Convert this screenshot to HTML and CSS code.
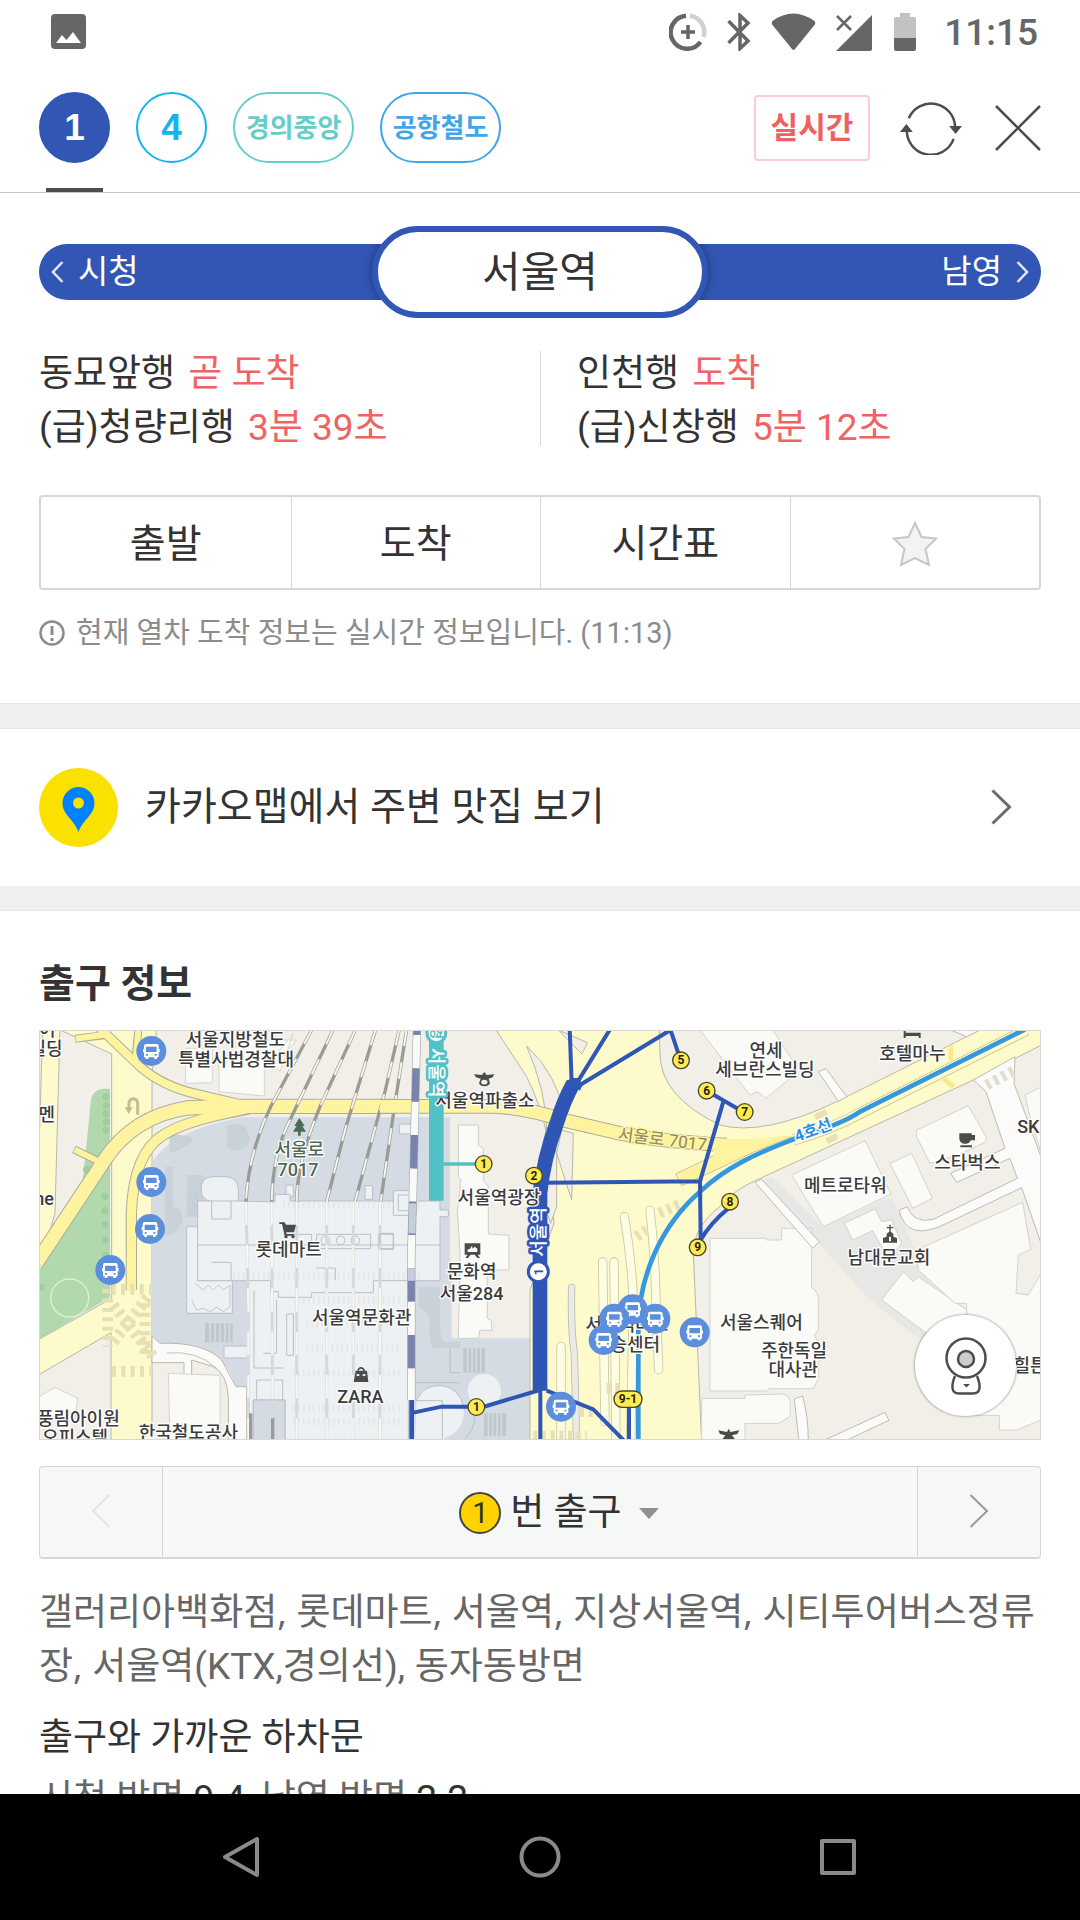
FILE: index.html
```html
<!DOCTYPE html>
<html lang="ko">
<head>
<meta charset="utf-8">
<meta name="viewport" content="width=device-width, initial-scale=1">
<title>서울역</title>
<link rel="stylesheet" href="styles.css">
</head>
<body>
<div class="app">
  <div class="status">
    <svg class="status-photo" width="35" height="35" viewBox="0 0 35 35"><path fill="#666" fill-rule="evenodd" d="M4 0H31Q35 0 35 4V31Q35 35 31 35H4Q0 35 0 31V4Q0 0 4 0ZM5 29H30L22 18L15.500 26L11 21Z"/></svg>
    <div class="status-icons">
      <svg width="38" height="38" viewBox="0 0 38 38" fill="none" stroke="#666" stroke-width="4.500"><path d="M17 2.800A16.500 16.500 0 1 0 31.500 29"/><path stroke="#d0d0d0" d="M21 2.800A16.500 16.500 0 0 1 34.500 24"/><path stroke-width="3.500" d="M19 12V26M12 19H26"/></svg>
      <svg width="24" height="38" viewBox="0 0 24 38" fill="none" stroke="#666" stroke-width="3.500"><path d="M1.500 8L21 28L13 35.500V2.500L21 10L1.500 30"/></svg>
      <svg width="45" height="38" viewBox="0 0 45 38"><path fill="#666" d="M1.500 8Q22 -7 43.500 8Q45 10 43.500 12L24 36Q22.500 38 21 36L1.500 12Q0 10 1.500 8Z"/></svg>
      <svg width="36" height="38" viewBox="0 0 36 38"><path fill="#666" d="M36 2V36Q36 38 34 38H0Z"/><path stroke="#fff" stroke-width="6" d="M1 3L15 17M15 3L1 17"/><path stroke="#666" stroke-width="2.500" d="M1 3L15 17M15 3L1 17"/></svg>
      <svg width="26" height="38" viewBox="0 0 26 38"><path fill="#c2c2c2" d="M8 0H18V4H22Q24 4 24 6V25H2V6Q2 4 4 4H8Z"/><path fill="#666" d="M2 25H24V36Q24 38 22 38H4Q2 38 2 36Z"/></svg>
    </div>
    <time class="clock">11:15</time>
  </div>

  <header class="topbar">
    <nav class="lines" aria-label="노선">
      <a class="line line-1" href="#" aria-current="page"><span class="badge">1</span></a>
      <a class="line line-4" href="#"><span class="badge">4</span></a>
      <a class="line line-gj" href="#"><span class="badge badge-wide">경의중앙</span></a>
      <a class="line line-ar" href="#"><span class="badge badge-wide">공항철도</span></a>
    </nav>
    <button class="live" type="button">실시간</button>
    <button class="icon-button" type="button" aria-label="새로고침">
      <svg width="62" height="54" viewBox="0 0 63 54" fill="none" stroke="#4d4d4d" stroke-width="2.500"><path d="M9 17A24.500 24.500 0 0 1 56 26M54.500 38A24.500 24.500 0 0 1 7 28"/><path fill="#4d4d4d" stroke="none" d="M50 25H63L56.500 33ZM0 31H13L6.500 23Z"/></svg>
    </button>
    <button class="icon-button close" type="button" aria-label="닫기">
      <svg width="46" height="46" viewBox="0 0 46 46" stroke="#4d4d4d" stroke-width="2.500"><path d="M1 1L45 45M45 1L1 45"/></svg>
    </button>
  </header>

  <main class="content">
    <section class="station">
      <div class="station-bar">
        <a class="side side-prev" href="#"><svg width="13" height="22" viewBox="0 0 13 22" fill="none" stroke="#e4e9f5" stroke-width="2.500"><path d="M11.500 1L2 11L11.500 21"/></svg>시청</a>
        <h1 class="station-name">서울역</h1>
        <a class="side side-next" href="#">남영<svg width="13" height="22" viewBox="0 0 13 22" fill="none" stroke="#e4e9f5" stroke-width="2.500"><path d="M1.500 1L11 11L1.500 21"/></svg></a>
      </div>
      <div class="arrivals">
        <ul class="arrival-list">
          <li>동묘앞행 <em>곧 도착</em></li>
          <li>(급)청량리행 <em>3분 39초</em></li>
        </ul>
        <ul class="arrival-list">
          <li>인천행 <em>도착</em></li>
          <li>(급)신창행 <em>5분 12초</em></li>
        </ul>
      </div>
      <div class="actions">
        <button type="button">출발</button>
        <button type="button">도착</button>
        <button type="button">시간표</button>
        <button type="button" aria-label="즐겨찾기"><svg width="46" height="46" viewBox="0 0 46 46"><path fill="#f3f3f3" stroke="#c6c6c6" stroke-width="2" d="M23 2L29.500 16L44 17.500L33.500 28L37 44L23 37L9 44L12.500 28L2 17.500L16.500 16Z"/></svg></button>
      </div>
      <p class="notice"><svg width="26" height="26" viewBox="0 0 26 26"><circle cx="13" cy="13" r="11.500" fill="none" stroke="#8c8c8c" stroke-width="2.500"/><path stroke="#8c8c8c" stroke-width="3" d="M13 6V15M13 18V21"/></svg>현재 열차 도착 정보는 실시간 정보입니다. (11:13)</p>
    </section>

    <a class="kakao" href="#">
      <svg width="79" height="79" viewBox="0 0 79 79"><circle cx="39.500" cy="39.500" r="39.500" fill="#fae100"/><path fill="#0082ff" fill-rule="evenodd" d="M39.500 19C48 19 55.500 26 55.500 35C55.500 47 44 51 39.500 64C35 51 23.500 47 23.500 35C23.500 26 31 19 39.500 19ZM39.500 29.500A5.500 5.500 0 1 0 39.500 40.500A5.500 5.500 0 1 0 39.500 29.500Z"/></svg>
      <span class="kakao-text">카카오맵에서 주변 맛집 보기</span>
      <svg width="21" height="36" viewBox="0 0 21 36" fill="none" stroke="#6b6b6b" stroke-width="3"><path d="M1.500 1.500L18.500 18L1.500 34.500"/></svg>
    </a>

    <section class="exits">
      <h2>출구 정보</h2>
      <div class="map">
        <svg class="map-canvas" viewBox="0 0 3006 1230" preserveAspectRatio="xMidYMid slice" role="img" aria-label="서울역 주변 지도">
          <defs>
            <g id="bus"><circle r="45" fill="#5b8fdd"/><path fill="#fff" fill-rule="evenodd" d="M-16 -21H16Q22 -21 22 -14V-6H25V4H22V19H17V24H9V19H-9V24H-17V19H-22V4H-25V-6H-22V-14Q-22 -21 -16 -21ZM-16 -13V3H16V-13ZM-16 9V14H-10V9ZM10 9V14H16V9Z"/></g>
            <g id="exit"><circle r="25" fill="#ffea50" stroke="#48442c" stroke-width="4"/></g>
          </defs>
          <rect width="3006" height="1230" fill="#f2efe9"/>

          <!-- west: park and roads -->
          <g transform="translate(-27 -30)">
            <g stroke="#b9b7ab" stroke-width="3">
              <path fill="#fdfacb" d="M38 20H90L75 580L55 650L20 700V390H27Z"/>
              <path fill="#b2d9ae" stroke="none" d="M183 240Q190 200 240 207V832L27 958V750L150 560Z"/>
              <path fill="#fdfacb" d="M80 25L245 102V835L20 962V1068L243 938V1265H366V165L380 25Z"/>
              <path fill="#d4dbe2" stroke="none" d="M366 430Q420 330 640 292H1260V1265H650V1100H618Q580 985 470 972L390 968L366 945Z"/>
              <path fill="#fafaf8" d="M366 948L390 970Q520 965 575 1020L618 1100H650V1265H595V1130Q590 1060 550 1040L485 1020V1070L462 1074V1028H366Z"/>
              <path fill="none" stroke="#c4c4be" d="M410 999Q500 990 560 1045"/>
            </g>
            <path fill="#fafbf7" stroke="#d6d6d0" stroke-width="3" d="M467 85H547V188L467 190ZM567 130L640 60H800L740 130H703V228L567 215ZM415 1060L570 1066V1265H420ZM27 1130L75 1102L143 1135L135 1200H27ZM725 120L790 40L750 155Z"/>
            <g fill="#c9d1d9"><path d="M418 340L485 350Q500 370 420 400ZM590 320Q650 290 660 360Q640 410 590 380ZM405 440H430V560Q460 560 458 600Q440 650 405 645ZM470 465H520V590H470Z"/></g>
            <g fill="none" stroke="#aeaca0">
              <path stroke-width="46" d="M20 728L225 418Q310 290 470 264L590 259H1100"/>
              <path stroke-width="30" d="M205 20L330 140Q400 200 500 222L620 250"/>
              <path stroke-width="34" d="M304 810V580Q310 400 400 345Q450 312 570 284L660 266"/>
              <path stroke-width="24" d="M132 388L215 428M135 56L235 44M326 20L317 110"/>
            </g>
            <g fill="none" stroke="#fef39e">
              <path stroke-width="40" d="M20 728L225 418Q310 290 470 264L590 259H1100"/>
              <path stroke-width="24" d="M205 20L330 140Q400 200 500 222L640 255"/>
              <path stroke-width="28" d="M304 812V580Q310 400 400 345Q450 312 570 284L660 264"/>
              <path stroke-width="18" d="M134 389L218 430M137 56L240 42M326 20L317 118"/>
            </g>
            <path fill="none" stroke="#e8dfb4" stroke-width="32" stroke-dasharray="12 16" d="M233 808V980M246 1054H366M245 808H366M345 850V1010"/>
            <path fill="none" stroke="#e8dfb4" stroke-width="34" stroke-dasharray="12 14" d="M250 965L355 830M250 855L370 1010"/>
            <path fill="none" stroke="#c9bd8c" stroke-width="9" d="M323 284V250Q322 236 308 236Q294 238 297 266"/>
            <path fill="#c9bd8c" d="M284 262H308L296 282Z"/>
            <g fill="#a0cf9d"><circle cx="228" cy="230" r="11"/><circle cx="229" cy="256" r="11"/><circle cx="228" cy="281" r="11"/><circle cx="229" cy="306" r="11"/><circle cx="228" cy="331" r="11"/><circle cx="170" cy="448" r="11"/><circle cx="225" cy="529" r="11"/><circle cx="225" cy="572" r="11"/><circle cx="225" cy="613" r="11"/><circle cx="225" cy="660" r="11"/><circle cx="225" cy="706" r="11"/><circle cx="34" cy="802" r="11"/></g>
            <circle cx="119" cy="834" r="57" fill="none" stroke="#dcefd9" stroke-width="4"/>
            <!-- station building -->
            <g fill="#edf1f4" stroke="#b9bfc6" stroke-width="3">
              <path d="M625 545V505Q620 470 585 470H545Q513 472 513 510Q515 540 545 545Z"/>
              <path d="M470 620H503V782H607V880H470ZM582 978H660V1014H582ZM1005 497H1028V538H1005ZM768 495H790V530H768Z"/>
              <path d="M655 780H1135V1265H765V1140H670V1265H655Z"/>
              <path d="M503 543H625L735 546V523H780V543H1230V570H1255V590H1230V782H1030V818H845V832H745V815H722V782H503Z"/>
              <path fill="none" d="M503 675H1230M545 543V597H603V543M545 727H603V780M860 643H1022V686H860ZM1045 643H1090V686H1045ZM800 643H845V686H800ZM858 744H916V780M680 1140V1080H758V1140M740 840V1000H700M770 882H790V1006H770ZM672 812V1044H760"/>
              <g fill="none"><circle cx="886" cy="661" r="13"/><circle cx="932" cy="661" r="13"/><circle cx="976" cy="661" r="13"/></g>
              <path fill="#d4dbe2" d="M670 1140H765V1265H670Z"/>
            </g>
            <path fill="#bfc7cf" d="M525 910H608V967H525Z"/>
            <path stroke="#d4dbe2" stroke-width="5" d="M540 910V967M555 910V967M570 910V967M585 910V967M598 910V967"/>
            <path fill="none" stroke="#c3c8cd" stroke-width="3" d="M475 520L488 515L500 530L485 545L500 560L485 575L475 560M495 790L520 810L535 795L550 810L565 795L580 810L600 795V860L580 875L560 862L540 875L520 865L500 870L485 840"/>
            <g fill="none" stroke="#dde2e5" stroke-width="22" stroke-dasharray="3 12"><path d="M760 555H1180M610 770H1180M820 840H1110M830 910H1110M830 985H1110M790 1060H1110M790 1165H1110M790 1205H1110"/></g>
            <path fill="none" stroke="#d8d8d8" stroke-width="9" d="M648 545L655 860V1265M725 545L728 1265M800 545V1265M890 545V1265M970 545V1265M1050 545V1265"/>
            <path fill="none" stroke="#f8f8f3" stroke-width="6" stroke-dasharray="70 60" d="M648 545L655 860V1265M725 545L728 1265M800 545V1265M890 545V1265M970 545V1265M1050 545V1265"/>
            <path fill="none" stroke="#9a9a98" stroke-width="10" d="M846 28L722 260Q655 400 648 545M910 28L780 300Q728 400 725 545M977 28L870 260Q800 430 800 545M1037 28L945 330L890 545M1108 28L1065 215L975 545M1130 28L1095 250L1052 545M662 1180V1265M728 1195V1265"/>
            <path fill="none" stroke="#f6f5ee" stroke-width="6" stroke-dasharray="50 50" d="M846 28L722 260Q655 400 648 545M910 28L780 300Q728 400 725 545M977 28L870 260Q800 430 800 545M1037 28L945 330L890 545M1108 28L1065 215L975 545M1130 28L1095 250L1052 545"/>
          </g>

          <!-- centre: plaza, main road -->
          <g transform="translate(1023 -30)">
            <path fill="#d4dbe2" d="M215 955H450V1265H110V785H215Z"/>
            <path fill="#c9d1d9" d="M115 800H180V860Q175 940 190 965H240V985H160Q145 960 150 900Q140 870 115 860Z"/>
            <path fill="#fdfacb" stroke="#b9b7ab" stroke-width="3" d="M345 25L440 170Q480 250 500 340L475 440V500Q525 560 522 610L450 810V1265H965L940 700Q940 620 1020 560Q1060 510 1130 480L1780 180L1990 72V25H1810L1370 245Q1150 350 1020 315Q840 230 840 100L838 25Z"/>
            <path fill="#f2efe9" stroke="#b9b7ab" stroke-width="3" d="M440 78Q530 160 555 290L500 330Q500 220 440 78ZM500 320L530 400V560L512 610L475 500V440ZM580 340L575 540L530 400L545 330ZM535 30L622 68L606 102Z"/>
            <path fill="#fafbf7" stroke="#cfcfca" stroke-width="3" d="M235 315H295V375L310 385V480L325 500V642L387 646V750H322V895L335 903V932L300 930L295 955H235L240 700L232 570L243 480L235 470Z"/>
            <g fill="#edf1f4" stroke="#b9bfc6" stroke-width="3"><path d="M58 312H98V342H58ZM40 512H108V586H40ZM55 525H98V572H55Z"/><path stroke="none" d="M110 1140Q130 1096 180 1096Q240 1100 253 1170Q250 1235 200 1250L187 1265H105Z"/><circle cx="313" cy="1112" r="50" stroke="none"/><path fill="none" d="M110 1088H238M105 1142H187V1265M110 1140Q130 1096 180 1096Q240 1100 253 1170M0 640H40V688H0ZM210 985V1058H240M245 1265Q285 1230 285 1190"/></g>
            <path fill="#bfc7cf" d="M250 985H315V1058H250ZM312 1180H378V1248H312Z"/>
            <path stroke="#d4dbe2" stroke-width="5" d="M263 985V1058M276 985V1058M289 985V1058M302 985V1058M325 1180V1248M338 1180V1248M351 1180V1248M364 1180V1248"/>
            <path fill="none" stroke="#aeaca0" stroke-width="44" d="M0 259H340Q430 262 560 303L720 340Q850 365 1040 375"/>
            <path fill="none" stroke="#fef39e" stroke-width="38" d="M0 259H340Q430 262 560 303L720 340Q850 365 1040 375"/>
            <path fill="#fef39e" stroke="#cbc492" stroke-width="3" d="M887 462L1020 398L1240 350L1130 392Q1030 440 905 497Z"/>
            <path fill="#fef39e" d="M1000 357L1120 357L1240 346L1130 390L1000 410Z"/>
            <path fill="none" stroke="#cbc492" stroke-width="34" d="M1240 360Q1360 325 1440 280L1940 30"/>
            <path fill="none" stroke="#fdfacb" stroke-width="29" d="M1240 360Q1360 325 1440 280L1940 30"/>
            <path fill="none" stroke="#f9e98e" stroke-width="14" d="M1713 75V120M1690 175L1720 200"/>
            <g fill="none" stroke-linecap="round">
              <path stroke="#cbc7a4" stroke-width="28" d="M668 726L675 1205M702 726L708 1265M733 590Q755 720 760 840L752 1265M810 572Q825 700 828 850L836 1048M543 980V1270"/>
              <path stroke="#fdfde4" stroke-width="23" d="M668 726L675 1205M702 726L708 1265M733 590Q755 720 760 840L752 1265M810 572Q825 700 828 850L836 1048M543 980V1270"/>
              <path stroke="#bdbbb0" stroke-width="22" d="M575 802Q572 930 583 1000L590 1270"/>
              <path stroke="#eceae4" stroke-width="17" d="M575 802Q572 930 583 1000L590 1270"/>
            </g>
            <path fill="none" stroke="#e8dfb4" stroke-width="32" stroke-dasharray="12 14" d="M838 580L905 550M770 650L800 630M460 1248H620M600 1175H650M680 1105H720"/>
            <path fill="none" stroke="#e8dfb4" stroke-width="18" d="M1305 292L1340 276M1340 364L1372 348"/>
            <!-- railway -->
            <path fill="none" stroke="#a8acb8" stroke-width="25" d="M111 25L101 440L94 700V1140"/>
            <path fill="none" stroke="#fafaf7" stroke-width="21" stroke-dasharray="100 100" stroke-dashoffset="180" d="M111 25L101 440L94 700V1140"/>
            <path fill="none" stroke="#7984ad" stroke-width="21" stroke-dasharray="100 100" stroke-dashoffset="80" d="M111 25L101 440L94 700V1140"/>
            <path stroke="#c6cedb" stroke-width="21" d="M98 550L96 640M94 745V782"/>
            <path fill="#52c1c6" d="M147 25H191V542H147Z"/>
            <path stroke="#52c1c6" stroke-width="11" d="M190 432H300"/>
          </g>

          <!-- east: blocks -->
          <g transform="translate(1983 -30)">
            <path fill="#e7e7e6" d="M180 484L215 470L370 620L575 530L650 700L800 870L680 960L640 945L500 830L330 640Z"/>
            <g fill="#fafbf7" stroke="#d3d3cd" stroke-width="3">
              <path d="M0 25H215L282 128Q290 160 262 182L198 235L172 215L150 225L0 30Z"/>
              <path d="M275 465L495 362L573 522L370 620L345 580Z"/>
              <path d="M570 430L635 400L697 535L638 565Z"/>
              <path d="M650 330L805 257L858 350V365L775 405L690 430L650 350Z"/>
              <path d="M433 610L525 567L545 605L575 600L605 670L590 690H550L518 632L458 660Z"/>
              <path d="M545 840L610 755L640 785L655 770L800 870V890L720 960L680 940Z"/>
              <path d="M650 690L968 547L992 688L955 705L948 820L985 825L1030 750V1197L950 1230H898V1186H800V850H765L655 750Z"/>
              <path d="M30 655H200V660H245V625H335V803Q358 815 355 850V930L343 945L356 970V1075L340 1106H205L203 1113H30Z"/>
              <path d="M5 1135H135V1125L250 1122Q275 1130 270 1160V1190L235 1210H135V1265H5Z"/>
              <path d="M975 225L1030 198V420L990 290Z"/>
            </g>
            <g fill="#fbfbf9" stroke="#bcbcb6" stroke-width="3">
              <path d="M355 155L378 146L440 230L415 244Z"/>
              <path d="M165 487L185 478L358 665L338 685Z"/>
              <path d="M820 180L945 110L942 190L1030 430V690L965 503L740 610Q620 670 597 570L622 560Q640 612 700 598L952 475L930 415L770 487L752 460L915 385L858 215Z"/>
              <path d="M283 1137L308 1128Q325 1190 325 1265H297ZM370 1262L555 1177L567 1201L430 1265ZM740 25H850L800 50Z"/>
            </g>
            <path fill="none" stroke="#e1ddd0" stroke-width="32" stroke-dasharray="12 14" d="M860 195L945 150"/>
          </g>

          <!-- subway lines and exits -->
          <g transform="translate(1023 -30)" fill="none">
            <path stroke="#3598df" stroke-width="14" d="M775 1265V930C775 760 850 610 960 515C1040 440 1130 400 1240 358C1360 320 1420 290 1440 275L1935 28"/>
            <g stroke="#3056b5" stroke-width="12">
              <path d="M569 25L575 190M692 25L590 190M868 32L600 195M870 25L900 115M481 1100V1265M480 1110L312 1160H185L100 1178M500 1112L640 1168L735 1265M747 1160V1265M500 488L960 484L962 660M960 484L1030 245M985 215L1080 270M962 660Q990 610 1045 565"/>
              <path stroke-width="14" d="M95 1140V1265"/>
              <path stroke-width="44" d="M480 1112V520Q490 420 530 310Q552 240 580 190"/>
              <path fill="#3056b5" stroke="none" d="M560 186L572 174H596L608 194L600 212Z"/>
            </g>
            <circle cx="475" cy="755" r="30" fill="#fff" stroke="#3056b5" stroke-width="9"/>
            <use href="#exit" x="311" y="432"/><use href="#exit" x="462" y="467"/><use href="#exit" x="903" y="121"/><use href="#exit" x="980" y="212"/><use href="#exit" x="953" y="682"/><use href="#exit" x="289" y="1161"/><use href="#exit" x="1094" y="276"/><use href="#exit" x="1050" y="545"/>
            <rect x="702" y="1113" width="84" height="49" rx="24" fill="#ffea50" stroke="#48442c" stroke-width="4"/>
          </g>
          <g class="exit-no" transform="translate(1023 -30)">
            <text x="311" y="444">1</text><text x="462" y="479">2</text><text x="903" y="133">5</text><text x="980" y="224">6</text><text x="953" y="694">9</text><text x="289" y="1173">1</text><text x="1094" y="288">7</text><text x="1050" y="557">8</text><text x="744" y="1150">9-1</text>
          </g>

          <!-- labels -->
          <g class="label" transform="translate(-27 -30)">
            <text x="52" y="48">어</text><text x="48" y="106">빌딩</text><text x="50" y="302">멘</text><text x="42" y="556">ne</text>
            <text x="616" y="78">서울지방철도</text><text x="618" y="137">특별사법경찰대</text>
            <text class="label-park" x="808" y="408">서울로</text><text class="label-park" x="804" y="467">7017</text>
            <text x="776" y="708">롯데마트</text><text x="995" y="912">서울역문화관</text><text x="991" y="1150">ZARA</text>
            <text x="145" y="1215">풍림아이원</text><text x="135" y="1272">오피스텔</text><text x="475" y="1258">한국철도공사</text>
          </g>
          <g class="label" transform="translate(1023 -30)">
            <text x="315" y="262">서울역파출소</text><text x="357" y="552">서울역광장</text><text x="275" y="775">문화역</text><text x="275" y="839">서울284</text>
            <text x="741" y="934">서울역버스</text><text x="741" y="994">환승센터</text>
            <text class="label-road" transform="translate(845 376) rotate(7)">서울로 7017</text>
            <text class="label-line1" transform="translate(494 636) rotate(-90)">서울역</text>
            <text class="label-line1 label-rail" transform="translate(149 158) rotate(90)">서울역</text>
            <circle cx="169" cy="40" r="28" fill="#fff" stroke="#52c1c6" stroke-width="9"/>
            <text class="label-num" transform="translate(489 755) rotate(-90)">1</text>
            <text class="label-num label-num-rail" transform="translate(155 40) rotate(90)">경</text>
          </g>
          <g class="label" transform="translate(1983 -30)">
            <text x="198" y="110">연세</text><text x="195" y="169">세브란스빌딩</text><text x="637" y="121">호텔마누</text><text x="985" y="338">SK</text>
            <text x="802" y="446">스타벅스</text><text x="436" y="516">메트로타워</text><text x="567" y="731">남대문교회</text><text x="184" y="926">서울스퀘어</text>
            <text x="282" y="1010">주한독일</text><text x="280" y="1067">대사관</text><text x="990" y="1055">힐튼</text>
            <text class="label-line4" transform="translate(345 346) rotate(-20)">4호선</text>
          </g>

          <!-- place symbols -->
          <g transform="translate(-27 -30)">
            <use href="#bus" x="364" y="93"/><use href="#bus" x="364" y="486"/><use href="#bus" x="360" y="627"/><use href="#bus" x="241" y="750"/>
            <path fill="#4c6a55" d="M808 294L824 318H817L828 335H812V347H804V335H789L800 318H793Z"/>
            <path fill="#4b4b4b" d="M748 607H764L768 614H798L792 637H768L770 642H793V647H764L756 612H748Z"/><circle cx="768" cy="650" r="5" fill="#4b4b4b"/><circle cx="789" cy="650" r="5" fill="#4b4b4b"/>
            <path fill="#4b4b4b" fill-rule="evenodd" d="M977 1052H982Q984 1041 993 1041Q1002 1041 1005 1052H1011L1015 1086H971ZM986 1052H1000Q998 1046 993 1046Q988 1046 986 1052ZM980 1062V1068H988V1062ZM998 1062V1068H1006V1062Z"/>
          </g>
          <g transform="translate(1023 -30)">
            <use href="#bus" x="543" y="1160"/><use href="#bus" x="671" y="960"/><use href="#bus" x="758" y="868"/><use href="#bus" x="703" y="896"/><use href="#bus" x="826" y="896"/><use href="#bus" x="944" y="937"/>
            <path fill="#4b4b4b" fill-rule="evenodd" d="M313 156L320 165L343 163L338 172L326 176L330 190Q325 199 313 199Q301 199 297 190L302 176L288 172L282 163L306 165ZM313 180A7 7 0 1 0 313 193A7 7 0 1 0 313 180Z"/>
            <path fill="#4b4b4b" fill-rule="evenodd" d="M254 670H301V704H293L300 714H292L284 704H272L264 714H256L263 704H254ZM263 696H292V686L284 680L278 686L276 677L269 688H263Z"/>
          </g>
          <g transform="translate(1983 -30)" fill="#4b4b4b">
            <path d="M778 340H815V345H825V361H812Q808 371 800 371H790Q778 368 778 355ZM781 376H816V382H781Z"/>
            <path fill-rule="evenodd" d="M568 614H572V621H580V625H572V635L580 641V650L591 654V668H549V654L560 650V641L568 635V625H560V621H568ZM567 650V664H573V650Z"/>
            <path d="M611 28H617V38H662V54H656V48H617V54H611Z"/>
            <path d="M86 1226L91 1236L118 1231L112 1242L96 1246L108 1262H64L76 1246L60 1242L55 1231L81 1236Z"/>
          </g>
        </svg>
        <button class="roadview" type="button" aria-label="로드뷰">
          <svg width="42" height="58" viewBox="0 0 42 58" fill="none" stroke="#4d4d4d" stroke-width="2.500"><path d="M10 39Q7 46 7.500 51Q8 56.500 14 56.500H28Q34 56.500 34.500 51Q35 46 32 39"/><circle cx="21" cy="21" r="19.500" fill="#fff"/><circle cx="21" cy="22" r="8" fill="#ccc"/><path fill="#4d4d4d" stroke="none" d="M18 47H25L21.500 50.500Z"/></svg>
        </button>
      </div>
      <div class="exit-picker">
        <button type="button" aria-label="이전 출구" disabled><svg width="20" height="34" viewBox="0 0 20 34" fill="none" stroke="#e3e4e4" stroke-width="2"><path d="M18.500 1L2 17L18.500 33"/></svg></button>
        <button class="exit-current" type="button"><span class="exit-badge">1</span>번 출구<svg width="20" height="11" viewBox="0 0 20 11"><path fill="#8f9191" d="M0 0H20L10 11Z"/></svg></button>
        <button type="button" aria-label="다음 출구"><svg width="20" height="34" viewBox="0 0 20 34" fill="none" stroke="#999" stroke-width="2"><path d="M1.500 1L18 17L1.500 33"/></svg></button>
      </div>
      <p class="places">갤러리아백화점, 롯데마트, 서울역, 지상서울역, 시티투어버스정류장, 서울역<span class="latin">(KTX,경의선),</span> 동자동방면</p>
      <h3>출구와 가까운 하차문</h3>
      <p class="doors">시청 방면 <b>9-4</b>, 남영 방면 <b>2-2</b></p>
    </section>
  </main>

  <nav class="system-nav" aria-label="시스템">
    <button type="button" aria-label="뒤로"><svg width="42" height="42" viewBox="0 0 42 42" fill="none" stroke="#8a8a8a" stroke-width="4" stroke-linejoin="round"><path d="M36 3V39L4 21Z"/></svg></button>
    <button type="button" aria-label="홈"><svg width="42" height="42" viewBox="0 0 42 42" fill="none" stroke="#8a8a8a" stroke-width="4"><circle cx="21" cy="21" r="18.500"/></svg></button>
    <button type="button" aria-label="최근 앱"><svg width="42" height="42" viewBox="0 0 42 42" fill="none" stroke="#8a8a8a" stroke-width="4" stroke-linejoin="round"><path d="M5 5H37V37H5Z"/></svg></button>
  </nav>
</div>
</body>
</html>
```
FILE: styles.css
```css
* { box-sizing: border-box; }

body {
  margin: 0;
  background: #fff;
  color: #333;
  font-family: Roboto, "Noto Sans CJK KR", sans-serif;
  font-size: 37px;
  line-height: 54px;
}

h1, h2, h3, p, ul { margin: 0; padding: 0; font-weight: 400; }
ul { list-style: none; }
a { color: inherit; text-decoration: none; }
svg { display: block; flex: none; }
button {
  margin: 0;
  padding: 0;
  border: 0;
  background: none;
  color: inherit;
  font: inherit;
}

.app { display: flex; flex-direction: column; height: 100vh; }

/* status bar */
.status {
  display: flex;
  align-items: center;
  height: 63px;
  padding: 0 42px 0 51px;
  color: #666;
}
.status-icons { display: flex; gap: 20px; margin-left: auto; }
.clock { margin-left: 26px; padding-top: 3px; font-weight: 500; }

/* line tabs */
.topbar {
  display: flex;
  align-items: center;
  height: 130px;
  padding: 0 39px;
  border-bottom: 1px solid #c4c4c4;
}
.lines { display: flex; align-self: stretch; gap: 26px; margin-right: auto; }
.line { display: flex; position: relative; align-items: center; }
.line[aria-current]::after {
  content: "";
  position: absolute;
  bottom: 0;
  left: 7px;
  right: 7px;
  height: 4px;
  background: #4d4d4d;
}
.badge {
  display: flex;
  align-items: center;
  justify-content: center;
  width: 71px;
  height: 71px;
  border: 2px solid;
  border-radius: 36px;
  font-family: "Liberation Sans", "Noto Sans CJK KR", sans-serif;
  font-weight: 700;
}
.badge-wide { width: 121px; font-size: 26px; font-weight: 700; }
.line-1 .badge { border-color: #3156b4; background: #3156b4; color: #fff; }
.line-4 { color: #13b5ea; }
.line-gj { color: #67cdc9; }
.line-ar { color: #41a5ea; }
.live {
  width: 116px;
  height: 66px;
  margin-right: 30px;
  border: 2px solid #fbcfcf;
  border-radius: 4px;
  color: #f06060;
  font-size: 30px;
  font-weight: 700;
}
.close { margin-left: 33px; }

/* page body */
.content { flex: 1; min-height: 0; overflow-y: auto; scrollbar-width: none; }
.station { padding: 33px 39px 50px; border-bottom: 1px solid #e4e4e4; }
.station-bar {
  display: grid;
  grid-template-columns: 1fr 336px 1fr;
  align-items: center;
}
.station-name {
  position: relative;
  z-index: 1;
  height: 92px;
  border: 6px solid #3156b4;
  border-radius: 46px;
  background: #fff;
  font-size: 42px;
  line-height: 82px;
  text-align: center;
}
.side {
  display: flex;
  position: relative;
  align-items: center;
  gap: 14px;
  height: 56px;
  padding: 0 12px;
  overflow: hidden;
  background: #3156b4;
  color: #fff;
  font-size: 33px;
}
.side-prev { margin-right: -46px; border-radius: 28px 0 0 28px; }
.side-next { justify-content: flex-end; margin-left: -46px; border-radius: 0 28px 28px 0; }
.side::after {
  content: "";
  position: absolute;
  top: -18px;
  width: 336px;
  height: 92px;
  border-radius: 46px;
  box-shadow: 0 0 8px 1px rgb(0 0 0 / 30%);
}
.side-prev::after { left: calc(100% - 46px); }
.side-next::after { right: calc(100% - 46px); }

.arrivals { display: grid; grid-template-columns: 1fr 1fr; margin-top: 29px; }
.arrival-list { position: relative; }
.arrival-list + .arrival-list { padding-left: 37px; }
.arrival-list + .arrival-list::before {
  content: "";
  position: absolute;
  top: 4px;
  bottom: 9px;
  left: 0;
  width: 1px;
  background: #d9d9d9;
}
.arrival-list em { margin-left: 4px; color: #f06363; font-style: normal; }

.actions {
  display: grid;
  grid-template-columns: repeat(4, 1fr);
  height: 95px;
  margin-top: 40px;
  border: 2px solid #d6d6d6;
  border-radius: 4px;
  font-size: 39px;
}
.actions button { display: flex; align-items: center; justify-content: center; padding-top: 2px; }
.actions button + button { border-left: 1px solid #d6d6d6; }

.notice {
  display: flex;
  align-items: center;
  gap: 11px;
  margin-top: 23px;
  color: #8c8c8c;
  font-size: 29px;
  line-height: 40px;
}

.kakao {
  display: flex;
  align-items: center;
  height: 206px;
  padding: 0 68px 0 39px;
  border: solid #f0f0f0;
  border-width: 24px 0;
  box-shadow: inset 0 1px #e4e4e4;
  font-size: 39px;
}
.kakao-text { flex: 1; margin-left: 27px; }

.exits { padding: 46px 39px 40px; border-top: 1px solid #e4e4e4; }
.exits h2 { font-size: 39px; font-weight: 700; }
.map { position: relative; margin-top: 19px; }
.map-canvas { width: 100%; height: 410px; outline: 1px solid #d9d9d2; outline-offset: -1px; }
.label text {
  fill: #3c3c3c;
  stroke: #fff;
  stroke-width: 8px;
  stroke-linejoin: round;
  paint-order: stroke;
  font-size: 54px;
  font-weight: 500;
  text-anchor: middle;
}
.label .label-park { fill: #4c6a55; }
.label .label-road { fill: #8c8766; stroke: #fef39e; font-size: 51px; font-weight: 400; }
.label .label-line1 { fill: #fff; stroke: #3056b5; stroke-width: 16px; }
.label .label-rail { stroke: #52c1c6; }
.label .label-line4 { fill: #2b8fdd; font-size: 48px; font-weight: 700; }
.label .label-num { fill: #3056b5; stroke: none; font-size: 39px; font-weight: 700; }
.label .label-num-rail { fill: #52c1c6; }
.exit-no text { fill: #222; font-size: 36px; font-weight: 700; text-anchor: middle; }

.roadview {
  display: flex;
  position: absolute;
  right: 25px;
  bottom: 24px;
  align-items: center;
  justify-content: center;
  width: 101px;
  height: 101px;
  border-radius: 50%;
  background: #fff;
  box-shadow: 0 0 2px 1px rgb(0 0 0 / 25%);
}

.exit-picker {
  display: grid;
  grid-template-columns: 122px 1fr 123px;
  height: 93px;
  margin-top: 26px;
  border: 1px solid #d5d7d7;
  border-bottom-width: 2px;
  border-radius: 4px;
  background: #f6f8f8;
}
.exit-picker button { display: flex; align-items: center; justify-content: center; padding-bottom: 3px; }
.exit-picker button + button { border-left: 1px solid #d5d7d7; }
.exit-picker .exit-current { gap: 9px; padding: 2px 0 0 38px; color: #333; }
.exit-current svg { margin-left: 8px; }
.exit-badge {
  width: 42px;
  height: 42px;
  border: 2px solid #444;
  border-radius: 50%;
  background: #ffd200;
  font-size: 29px;
  line-height: 38px;
  text-align: center;
}

.places {
  margin-top: 25px;
  color: #666;
  font-family: "Open Sans", "Noto Sans CJK KR", sans-serif;
  word-break: break-all;
}
.places .latin { font-family: Roboto, "Noto Sans CJK KR", sans-serif; line-height: 1; }
.exits h3 { margin-top: 19px; font-size: 37px; }
.doors { margin-top: 7px; color: #666; }
.doors b { color: #333; font-weight: 400; }

/* system navigation */
.system-nav {
  display: flex;
  align-items: center;
  justify-content: center;
  gap: 256px;
  height: 126px;
  background: #000;
}
```
